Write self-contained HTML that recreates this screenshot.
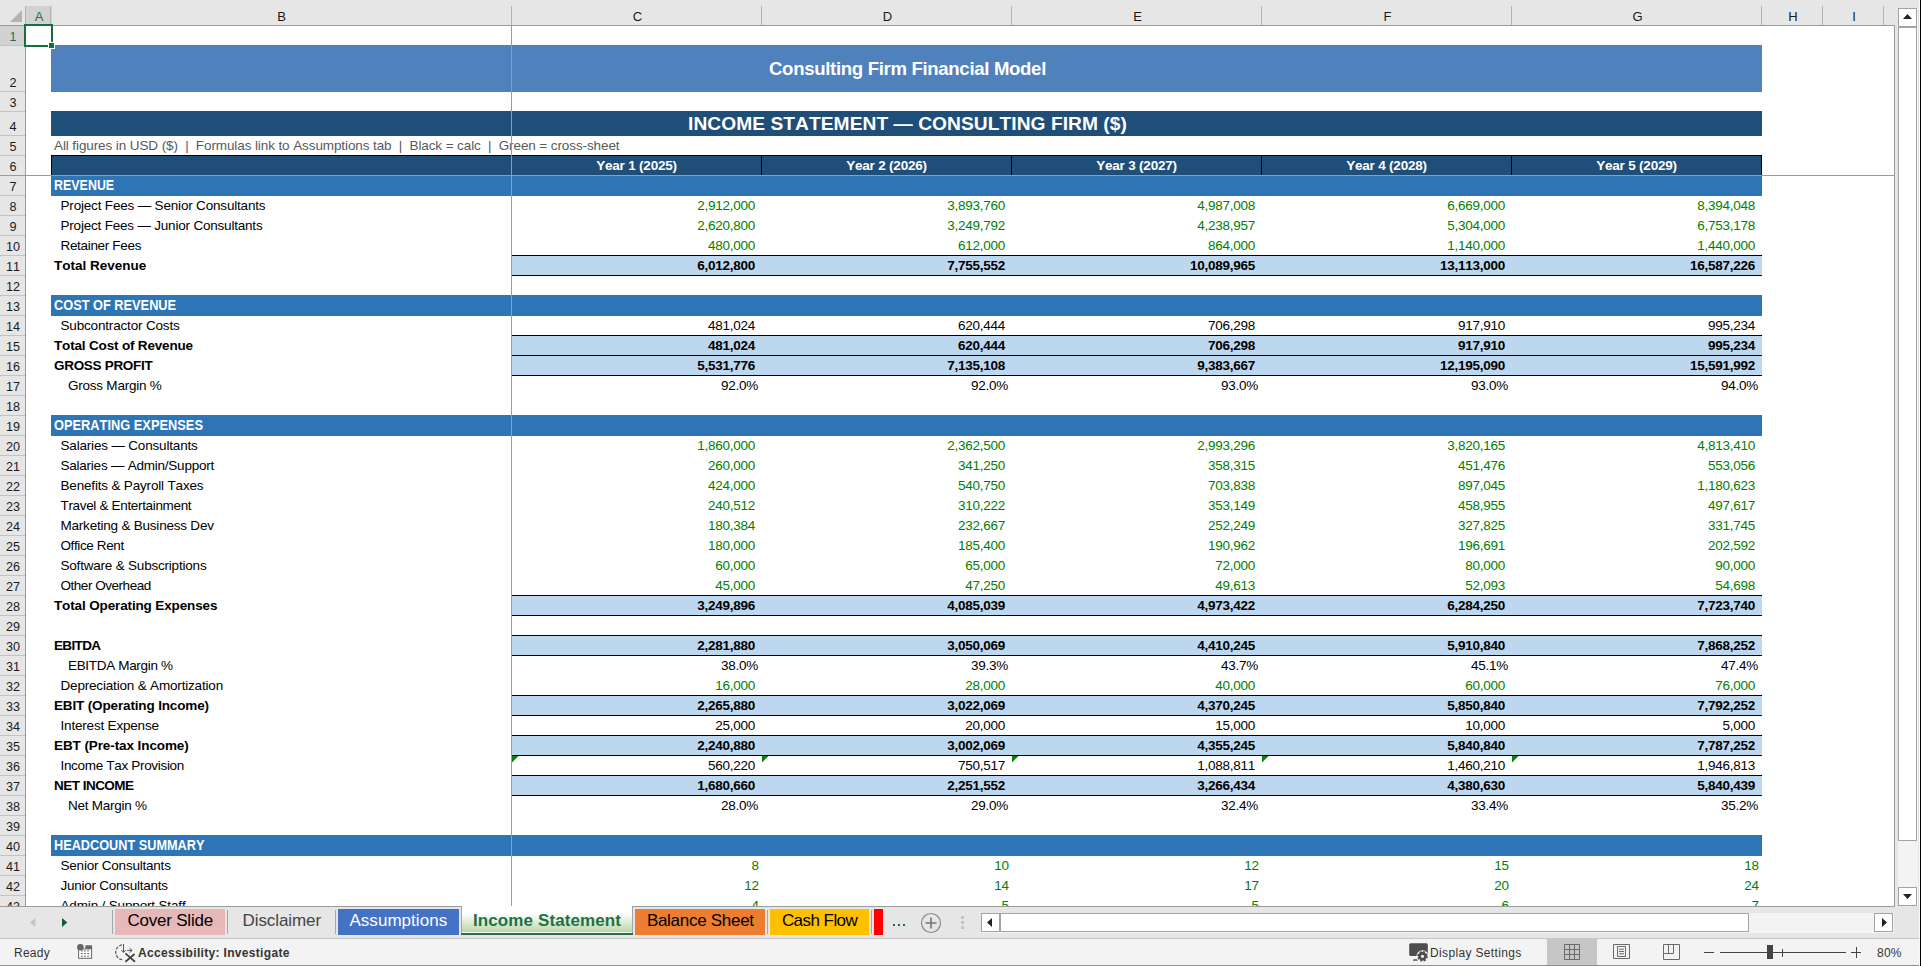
<!DOCTYPE html><html><head><meta charset="utf-8"><title>Income Statement</title><style>
html,body{margin:0;padding:0}body{width:1921px;height:966px;position:relative;overflow:hidden;background:#fff;font-family:"Liberation Sans", sans-serif;font-size:13px;color:#000;font-kerning:none}
div{box-sizing:border-box}svg{position:absolute;overflow:visible}
</style></head><body>
<div style="position:absolute;left:0;top:0;width:1895px;height:906px;overflow:hidden">
<div style="position:absolute;left:51px;top:45px;width:1711px;height:47px;background:#4f81bd;"></div>
<div style="position:absolute;left:51px;top:45px;width:1711px;height:47px;line-height:47px;white-space:pre;text-align:center;padding-left:2px;color:#fff;font-weight:700;font-size:18.6px;letter-spacing:-0.33px">Consulting Firm Financial Model</div>
<div style="position:absolute;left:51px;top:111px;width:1711px;height:25px;background:#1f4e79;"></div>
<div style="position:absolute;left:51px;top:111px;width:1711px;height:25px;line-height:25px;white-space:pre;text-align:center;padding-left:2px;color:#fff;font-weight:700;font-size:19.2px;letter-spacing:0.05px">INCOME STATEMENT — CONSULTING FIRM ($)</div>
<div style="position:absolute;left:51px;top:136px;width:700px;height:20px;line-height:20px;white-space:pre;color:#595959;padding-left:3px;font-size:13.5px;word-spacing:0px;letter-spacing:-0.1px">All figures in USD ($)  |  Formulas link to Assumptions tab  |  Black = calc  |  Green = cross-sheet</div>
<div style="position:absolute;left:51px;top:155px;width:1711px;height:20px;background:#1f4e79;border:1px solid #000;border-bottom:none"></div>
<div style="position:absolute;left:761px;top:155px;width:1px;height:20px;background:#000;"></div>
<div style="position:absolute;left:512px;top:156px;width:249px;height:19px;line-height:19px;white-space:pre;text-align:center;color:#fff;font-weight:700;font-size:13.5px;letter-spacing:-0.2px">Year 1 (2025)</div>
<div style="position:absolute;left:1011px;top:155px;width:1px;height:20px;background:#000;"></div>
<div style="position:absolute;left:762px;top:156px;width:249px;height:19px;line-height:19px;white-space:pre;text-align:center;color:#fff;font-weight:700;font-size:13.5px;letter-spacing:-0.2px">Year 2 (2026)</div>
<div style="position:absolute;left:1261px;top:155px;width:1px;height:20px;background:#000;"></div>
<div style="position:absolute;left:1012px;top:156px;width:249px;height:19px;line-height:19px;white-space:pre;text-align:center;color:#fff;font-weight:700;font-size:13.5px;letter-spacing:-0.2px">Year 3 (2027)</div>
<div style="position:absolute;left:1511px;top:155px;width:1px;height:20px;background:#000;"></div>
<div style="position:absolute;left:1262px;top:156px;width:249px;height:19px;line-height:19px;white-space:pre;text-align:center;color:#fff;font-weight:700;font-size:13.5px;letter-spacing:-0.2px">Year 4 (2028)</div>
<div style="position:absolute;left:1512px;top:156px;width:249px;height:19px;line-height:19px;white-space:pre;text-align:center;color:#fff;font-weight:700;font-size:13.5px;letter-spacing:-0.2px">Year 5 (2029)</div>
<div style="position:absolute;left:51px;top:175px;width:1711px;height:21px;background:#2e75b6;"></div>
<div style="position:absolute;left:51px;top:175px;width:460px;height:20px;line-height:20px;white-space:pre;padding-left:3px;color:#fff;font-weight:700;font-size:14px;"><span style="display:inline-block;transform:scaleX(0.8891);transform-origin:0 50%">REVENUE</span></div>
<div style="position:absolute;left:51px;top:196px;width:460px;height:20px;line-height:20px;white-space:pre;padding-left:9.5px;color:#000;font-size:13.5px;letter-spacing:-0.18px;">Project Fees — Senior Consultants</div>
<div style="position:absolute;left:512px;top:196px;width:250px;height:20px;line-height:20px;white-space:pre;text-align:right;padding-right:7px;color:#008000;font-size:13.5px;letter-spacing:-0.25px;">2,912,000</div>
<div style="position:absolute;left:762px;top:196px;width:250px;height:20px;line-height:20px;white-space:pre;text-align:right;padding-right:7px;color:#008000;font-size:13.5px;letter-spacing:-0.25px;">3,893,760</div>
<div style="position:absolute;left:1012px;top:196px;width:250px;height:20px;line-height:20px;white-space:pre;text-align:right;padding-right:7px;color:#008000;font-size:13.5px;letter-spacing:-0.25px;">4,987,008</div>
<div style="position:absolute;left:1262px;top:196px;width:250px;height:20px;line-height:20px;white-space:pre;text-align:right;padding-right:7px;color:#008000;font-size:13.5px;letter-spacing:-0.25px;">6,669,000</div>
<div style="position:absolute;left:1512px;top:196px;width:250px;height:20px;line-height:20px;white-space:pre;text-align:right;padding-right:7px;color:#008000;font-size:13.5px;letter-spacing:-0.25px;">8,394,048</div>
<div style="position:absolute;left:51px;top:216px;width:460px;height:20px;line-height:20px;white-space:pre;padding-left:9.5px;color:#000;font-size:13.5px;letter-spacing:-0.201px;">Project Fees — Junior Consultants</div>
<div style="position:absolute;left:512px;top:216px;width:250px;height:20px;line-height:20px;white-space:pre;text-align:right;padding-right:7px;color:#008000;font-size:13.5px;letter-spacing:-0.25px;">2,620,800</div>
<div style="position:absolute;left:762px;top:216px;width:250px;height:20px;line-height:20px;white-space:pre;text-align:right;padding-right:7px;color:#008000;font-size:13.5px;letter-spacing:-0.25px;">3,249,792</div>
<div style="position:absolute;left:1012px;top:216px;width:250px;height:20px;line-height:20px;white-space:pre;text-align:right;padding-right:7px;color:#008000;font-size:13.5px;letter-spacing:-0.25px;">4,238,957</div>
<div style="position:absolute;left:1262px;top:216px;width:250px;height:20px;line-height:20px;white-space:pre;text-align:right;padding-right:7px;color:#008000;font-size:13.5px;letter-spacing:-0.25px;">5,304,000</div>
<div style="position:absolute;left:1512px;top:216px;width:250px;height:20px;line-height:20px;white-space:pre;text-align:right;padding-right:7px;color:#008000;font-size:13.5px;letter-spacing:-0.25px;">6,753,178</div>
<div style="position:absolute;left:51px;top:236px;width:460px;height:20px;line-height:20px;white-space:pre;padding-left:9.5px;color:#000;font-size:13.5px;letter-spacing:-0.324px;">Retainer Fees</div>
<div style="position:absolute;left:512px;top:236px;width:250px;height:20px;line-height:20px;white-space:pre;text-align:right;padding-right:7px;color:#008000;font-size:13.5px;letter-spacing:-0.25px;">480,000</div>
<div style="position:absolute;left:762px;top:236px;width:250px;height:20px;line-height:20px;white-space:pre;text-align:right;padding-right:7px;color:#008000;font-size:13.5px;letter-spacing:-0.25px;">612,000</div>
<div style="position:absolute;left:1012px;top:236px;width:250px;height:20px;line-height:20px;white-space:pre;text-align:right;padding-right:7px;color:#008000;font-size:13.5px;letter-spacing:-0.25px;">864,000</div>
<div style="position:absolute;left:1262px;top:236px;width:250px;height:20px;line-height:20px;white-space:pre;text-align:right;padding-right:7px;color:#008000;font-size:13.5px;letter-spacing:-0.25px;">1,140,000</div>
<div style="position:absolute;left:1512px;top:236px;width:250px;height:20px;line-height:20px;white-space:pre;text-align:right;padding-right:7px;color:#008000;font-size:13.5px;letter-spacing:-0.25px;">1,440,000</div>
<div style="position:absolute;left:51px;top:256px;width:460px;height:20px;line-height:20px;white-space:pre;padding-left:3px;color:#000;font-size:13.5px;letter-spacing:-0.004px;font-weight:700;letter-spacing:-0.004px;">Total Revenue</div>
<div style="position:absolute;left:512px;top:255px;width:1250px;height:21px;background:#bdd7ee;border-top:1px solid #000;border-bottom:1px solid #000"></div>
<div style="position:absolute;left:512px;top:256px;width:250px;height:20px;line-height:20px;white-space:pre;text-align:right;padding-right:7px;color:#000;font-size:13.5px;letter-spacing:-0.25px;font-weight:700;letter-spacing:-0.25px;">6,012,800</div>
<div style="position:absolute;left:762px;top:256px;width:250px;height:20px;line-height:20px;white-space:pre;text-align:right;padding-right:7px;color:#000;font-size:13.5px;letter-spacing:-0.25px;font-weight:700;letter-spacing:-0.25px;">7,755,552</div>
<div style="position:absolute;left:1012px;top:256px;width:250px;height:20px;line-height:20px;white-space:pre;text-align:right;padding-right:7px;color:#000;font-size:13.5px;letter-spacing:-0.25px;font-weight:700;letter-spacing:-0.25px;">10,089,965</div>
<div style="position:absolute;left:1262px;top:256px;width:250px;height:20px;line-height:20px;white-space:pre;text-align:right;padding-right:7px;color:#000;font-size:13.5px;letter-spacing:-0.25px;font-weight:700;letter-spacing:-0.25px;">13,113,000</div>
<div style="position:absolute;left:1512px;top:256px;width:250px;height:20px;line-height:20px;white-space:pre;text-align:right;padding-right:7px;color:#000;font-size:13.5px;letter-spacing:-0.25px;font-weight:700;letter-spacing:-0.25px;">16,587,226</div>
<div style="position:absolute;left:51px;top:295px;width:1711px;height:21px;background:#2e75b6;"></div>
<div style="position:absolute;left:51px;top:295px;width:460px;height:20px;line-height:20px;white-space:pre;padding-left:3px;color:#fff;font-weight:700;font-size:14px;"><span style="display:inline-block;transform:scaleX(0.9128);transform-origin:0 50%">COST OF REVENUE</span></div>
<div style="position:absolute;left:51px;top:316px;width:460px;height:20px;line-height:20px;white-space:pre;padding-left:9.5px;color:#000;font-size:13.5px;letter-spacing:-0.168px;">Subcontractor Costs</div>
<div style="position:absolute;left:512px;top:316px;width:250px;height:20px;line-height:20px;white-space:pre;text-align:right;padding-right:7px;color:#000;font-size:13.5px;letter-spacing:-0.25px;">481,024</div>
<div style="position:absolute;left:762px;top:316px;width:250px;height:20px;line-height:20px;white-space:pre;text-align:right;padding-right:7px;color:#000;font-size:13.5px;letter-spacing:-0.25px;">620,444</div>
<div style="position:absolute;left:1012px;top:316px;width:250px;height:20px;line-height:20px;white-space:pre;text-align:right;padding-right:7px;color:#000;font-size:13.5px;letter-spacing:-0.25px;">706,298</div>
<div style="position:absolute;left:1262px;top:316px;width:250px;height:20px;line-height:20px;white-space:pre;text-align:right;padding-right:7px;color:#000;font-size:13.5px;letter-spacing:-0.25px;">917,910</div>
<div style="position:absolute;left:1512px;top:316px;width:250px;height:20px;line-height:20px;white-space:pre;text-align:right;padding-right:7px;color:#000;font-size:13.5px;letter-spacing:-0.25px;">995,234</div>
<div style="position:absolute;left:51px;top:336px;width:460px;height:20px;line-height:20px;white-space:pre;padding-left:3px;color:#000;font-size:13.5px;letter-spacing:-0.17px;font-weight:700;letter-spacing:-0.17px;">Total Cost of Revenue</div>
<div style="position:absolute;left:512px;top:335px;width:1250px;height:21px;background:#bdd7ee;border-top:1px solid #000;border-bottom:1px solid #000"></div>
<div style="position:absolute;left:512px;top:336px;width:250px;height:20px;line-height:20px;white-space:pre;text-align:right;padding-right:7px;color:#000;font-size:13.5px;letter-spacing:-0.25px;font-weight:700;letter-spacing:-0.25px;">481,024</div>
<div style="position:absolute;left:762px;top:336px;width:250px;height:20px;line-height:20px;white-space:pre;text-align:right;padding-right:7px;color:#000;font-size:13.5px;letter-spacing:-0.25px;font-weight:700;letter-spacing:-0.25px;">620,444</div>
<div style="position:absolute;left:1012px;top:336px;width:250px;height:20px;line-height:20px;white-space:pre;text-align:right;padding-right:7px;color:#000;font-size:13.5px;letter-spacing:-0.25px;font-weight:700;letter-spacing:-0.25px;">706,298</div>
<div style="position:absolute;left:1262px;top:336px;width:250px;height:20px;line-height:20px;white-space:pre;text-align:right;padding-right:7px;color:#000;font-size:13.5px;letter-spacing:-0.25px;font-weight:700;letter-spacing:-0.25px;">917,910</div>
<div style="position:absolute;left:1512px;top:336px;width:250px;height:20px;line-height:20px;white-space:pre;text-align:right;padding-right:7px;color:#000;font-size:13.5px;letter-spacing:-0.25px;font-weight:700;letter-spacing:-0.25px;">995,234</div>
<div style="position:absolute;left:51px;top:356px;width:460px;height:20px;line-height:20px;white-space:pre;padding-left:3px;color:#000;font-size:13.5px;letter-spacing:-0.299px;font-weight:700;letter-spacing:-0.299px;">GROSS PROFIT</div>
<div style="position:absolute;left:512px;top:355px;width:1250px;height:21px;background:#bdd7ee;border-top:1px solid #000;border-bottom:1px solid #000"></div>
<div style="position:absolute;left:512px;top:356px;width:250px;height:20px;line-height:20px;white-space:pre;text-align:right;padding-right:7px;color:#000;font-size:13.5px;letter-spacing:-0.25px;font-weight:700;letter-spacing:-0.25px;">5,531,776</div>
<div style="position:absolute;left:762px;top:356px;width:250px;height:20px;line-height:20px;white-space:pre;text-align:right;padding-right:7px;color:#000;font-size:13.5px;letter-spacing:-0.25px;font-weight:700;letter-spacing:-0.25px;">7,135,108</div>
<div style="position:absolute;left:1012px;top:356px;width:250px;height:20px;line-height:20px;white-space:pre;text-align:right;padding-right:7px;color:#000;font-size:13.5px;letter-spacing:-0.25px;font-weight:700;letter-spacing:-0.25px;">9,383,667</div>
<div style="position:absolute;left:1262px;top:356px;width:250px;height:20px;line-height:20px;white-space:pre;text-align:right;padding-right:7px;color:#000;font-size:13.5px;letter-spacing:-0.25px;font-weight:700;letter-spacing:-0.25px;">12,195,090</div>
<div style="position:absolute;left:1512px;top:356px;width:250px;height:20px;line-height:20px;white-space:pre;text-align:right;padding-right:7px;color:#000;font-size:13.5px;letter-spacing:-0.25px;font-weight:700;letter-spacing:-0.25px;">15,591,992</div>
<div style="position:absolute;left:51px;top:376px;width:460px;height:20px;line-height:20px;white-space:pre;padding-left:17px;color:#000;font-size:13.5px;letter-spacing:-0.231px;">Gross Margin %</div>
<div style="position:absolute;left:512px;top:376px;width:250px;height:20px;line-height:20px;white-space:pre;text-align:right;padding-right:4px;color:#000;font-size:13.5px;letter-spacing:-0.25px;">92.0%</div>
<div style="position:absolute;left:762px;top:376px;width:250px;height:20px;line-height:20px;white-space:pre;text-align:right;padding-right:4px;color:#000;font-size:13.5px;letter-spacing:-0.25px;">92.0%</div>
<div style="position:absolute;left:1012px;top:376px;width:250px;height:20px;line-height:20px;white-space:pre;text-align:right;padding-right:4px;color:#000;font-size:13.5px;letter-spacing:-0.25px;">93.0%</div>
<div style="position:absolute;left:1262px;top:376px;width:250px;height:20px;line-height:20px;white-space:pre;text-align:right;padding-right:4px;color:#000;font-size:13.5px;letter-spacing:-0.25px;">93.0%</div>
<div style="position:absolute;left:1512px;top:376px;width:250px;height:20px;line-height:20px;white-space:pre;text-align:right;padding-right:4px;color:#000;font-size:13.5px;letter-spacing:-0.25px;">94.0%</div>
<div style="position:absolute;left:51px;top:415px;width:1711px;height:21px;background:#2e75b6;"></div>
<div style="position:absolute;left:51px;top:415px;width:460px;height:20px;line-height:20px;white-space:pre;padding-left:3px;color:#fff;font-weight:700;font-size:14px;"><span style="display:inline-block;transform:scaleX(0.9161);transform-origin:0 50%">OPERATING EXPENSES</span></div>
<div style="position:absolute;left:51px;top:436px;width:460px;height:20px;line-height:20px;white-space:pre;padding-left:9.5px;color:#000;font-size:13.5px;letter-spacing:-0.18px;">Salaries — Consultants</div>
<div style="position:absolute;left:512px;top:436px;width:250px;height:20px;line-height:20px;white-space:pre;text-align:right;padding-right:7px;color:#008000;font-size:13.5px;letter-spacing:-0.25px;">1,860,000</div>
<div style="position:absolute;left:762px;top:436px;width:250px;height:20px;line-height:20px;white-space:pre;text-align:right;padding-right:7px;color:#008000;font-size:13.5px;letter-spacing:-0.25px;">2,362,500</div>
<div style="position:absolute;left:1012px;top:436px;width:250px;height:20px;line-height:20px;white-space:pre;text-align:right;padding-right:7px;color:#008000;font-size:13.5px;letter-spacing:-0.25px;">2,993,296</div>
<div style="position:absolute;left:1262px;top:436px;width:250px;height:20px;line-height:20px;white-space:pre;text-align:right;padding-right:7px;color:#008000;font-size:13.5px;letter-spacing:-0.25px;">3,820,165</div>
<div style="position:absolute;left:1512px;top:436px;width:250px;height:20px;line-height:20px;white-space:pre;text-align:right;padding-right:7px;color:#008000;font-size:13.5px;letter-spacing:-0.25px;">4,813,410</div>
<div style="position:absolute;left:51px;top:456px;width:460px;height:20px;line-height:20px;white-space:pre;padding-left:9.5px;color:#000;font-size:13.5px;letter-spacing:-0.232px;">Salaries — Admin/Support</div>
<div style="position:absolute;left:512px;top:456px;width:250px;height:20px;line-height:20px;white-space:pre;text-align:right;padding-right:7px;color:#008000;font-size:13.5px;letter-spacing:-0.25px;">260,000</div>
<div style="position:absolute;left:762px;top:456px;width:250px;height:20px;line-height:20px;white-space:pre;text-align:right;padding-right:7px;color:#008000;font-size:13.5px;letter-spacing:-0.25px;">341,250</div>
<div style="position:absolute;left:1012px;top:456px;width:250px;height:20px;line-height:20px;white-space:pre;text-align:right;padding-right:7px;color:#008000;font-size:13.5px;letter-spacing:-0.25px;">358,315</div>
<div style="position:absolute;left:1262px;top:456px;width:250px;height:20px;line-height:20px;white-space:pre;text-align:right;padding-right:7px;color:#008000;font-size:13.5px;letter-spacing:-0.25px;">451,476</div>
<div style="position:absolute;left:1512px;top:456px;width:250px;height:20px;line-height:20px;white-space:pre;text-align:right;padding-right:7px;color:#008000;font-size:13.5px;letter-spacing:-0.25px;">553,056</div>
<div style="position:absolute;left:51px;top:476px;width:460px;height:20px;line-height:20px;white-space:pre;padding-left:9.5px;color:#000;font-size:13.5px;letter-spacing:-0.174px;">Benefits &amp; Payroll Taxes</div>
<div style="position:absolute;left:512px;top:476px;width:250px;height:20px;line-height:20px;white-space:pre;text-align:right;padding-right:7px;color:#008000;font-size:13.5px;letter-spacing:-0.25px;">424,000</div>
<div style="position:absolute;left:762px;top:476px;width:250px;height:20px;line-height:20px;white-space:pre;text-align:right;padding-right:7px;color:#008000;font-size:13.5px;letter-spacing:-0.25px;">540,750</div>
<div style="position:absolute;left:1012px;top:476px;width:250px;height:20px;line-height:20px;white-space:pre;text-align:right;padding-right:7px;color:#008000;font-size:13.5px;letter-spacing:-0.25px;">703,838</div>
<div style="position:absolute;left:1262px;top:476px;width:250px;height:20px;line-height:20px;white-space:pre;text-align:right;padding-right:7px;color:#008000;font-size:13.5px;letter-spacing:-0.25px;">897,045</div>
<div style="position:absolute;left:1512px;top:476px;width:250px;height:20px;line-height:20px;white-space:pre;text-align:right;padding-right:7px;color:#008000;font-size:13.5px;letter-spacing:-0.25px;">1,180,623</div>
<div style="position:absolute;left:51px;top:496px;width:460px;height:20px;line-height:20px;white-space:pre;padding-left:9.5px;color:#000;font-size:13.5px;letter-spacing:-0.331px;">Travel &amp; Entertainment</div>
<div style="position:absolute;left:512px;top:496px;width:250px;height:20px;line-height:20px;white-space:pre;text-align:right;padding-right:7px;color:#008000;font-size:13.5px;letter-spacing:-0.25px;">240,512</div>
<div style="position:absolute;left:762px;top:496px;width:250px;height:20px;line-height:20px;white-space:pre;text-align:right;padding-right:7px;color:#008000;font-size:13.5px;letter-spacing:-0.25px;">310,222</div>
<div style="position:absolute;left:1012px;top:496px;width:250px;height:20px;line-height:20px;white-space:pre;text-align:right;padding-right:7px;color:#008000;font-size:13.5px;letter-spacing:-0.25px;">353,149</div>
<div style="position:absolute;left:1262px;top:496px;width:250px;height:20px;line-height:20px;white-space:pre;text-align:right;padding-right:7px;color:#008000;font-size:13.5px;letter-spacing:-0.25px;">458,955</div>
<div style="position:absolute;left:1512px;top:496px;width:250px;height:20px;line-height:20px;white-space:pre;text-align:right;padding-right:7px;color:#008000;font-size:13.5px;letter-spacing:-0.25px;">497,617</div>
<div style="position:absolute;left:51px;top:516px;width:460px;height:20px;line-height:20px;white-space:pre;padding-left:9.5px;color:#000;font-size:13.5px;letter-spacing:-0.212px;">Marketing &amp; Business Dev</div>
<div style="position:absolute;left:512px;top:516px;width:250px;height:20px;line-height:20px;white-space:pre;text-align:right;padding-right:7px;color:#008000;font-size:13.5px;letter-spacing:-0.25px;">180,384</div>
<div style="position:absolute;left:762px;top:516px;width:250px;height:20px;line-height:20px;white-space:pre;text-align:right;padding-right:7px;color:#008000;font-size:13.5px;letter-spacing:-0.25px;">232,667</div>
<div style="position:absolute;left:1012px;top:516px;width:250px;height:20px;line-height:20px;white-space:pre;text-align:right;padding-right:7px;color:#008000;font-size:13.5px;letter-spacing:-0.25px;">252,249</div>
<div style="position:absolute;left:1262px;top:516px;width:250px;height:20px;line-height:20px;white-space:pre;text-align:right;padding-right:7px;color:#008000;font-size:13.5px;letter-spacing:-0.25px;">327,825</div>
<div style="position:absolute;left:1512px;top:516px;width:250px;height:20px;line-height:20px;white-space:pre;text-align:right;padding-right:7px;color:#008000;font-size:13.5px;letter-spacing:-0.25px;">331,745</div>
<div style="position:absolute;left:51px;top:536px;width:460px;height:20px;line-height:20px;white-space:pre;padding-left:9.5px;color:#000;font-size:13.5px;letter-spacing:-0.377px;">Office Rent</div>
<div style="position:absolute;left:512px;top:536px;width:250px;height:20px;line-height:20px;white-space:pre;text-align:right;padding-right:7px;color:#008000;font-size:13.5px;letter-spacing:-0.25px;">180,000</div>
<div style="position:absolute;left:762px;top:536px;width:250px;height:20px;line-height:20px;white-space:pre;text-align:right;padding-right:7px;color:#008000;font-size:13.5px;letter-spacing:-0.25px;">185,400</div>
<div style="position:absolute;left:1012px;top:536px;width:250px;height:20px;line-height:20px;white-space:pre;text-align:right;padding-right:7px;color:#008000;font-size:13.5px;letter-spacing:-0.25px;">190,962</div>
<div style="position:absolute;left:1262px;top:536px;width:250px;height:20px;line-height:20px;white-space:pre;text-align:right;padding-right:7px;color:#008000;font-size:13.5px;letter-spacing:-0.25px;">196,691</div>
<div style="position:absolute;left:1512px;top:536px;width:250px;height:20px;line-height:20px;white-space:pre;text-align:right;padding-right:7px;color:#008000;font-size:13.5px;letter-spacing:-0.25px;">202,592</div>
<div style="position:absolute;left:51px;top:556px;width:460px;height:20px;line-height:20px;white-space:pre;padding-left:9.5px;color:#000;font-size:13.5px;letter-spacing:-0.204px;">Software &amp; Subscriptions</div>
<div style="position:absolute;left:512px;top:556px;width:250px;height:20px;line-height:20px;white-space:pre;text-align:right;padding-right:7px;color:#008000;font-size:13.5px;letter-spacing:-0.25px;">60,000</div>
<div style="position:absolute;left:762px;top:556px;width:250px;height:20px;line-height:20px;white-space:pre;text-align:right;padding-right:7px;color:#008000;font-size:13.5px;letter-spacing:-0.25px;">65,000</div>
<div style="position:absolute;left:1012px;top:556px;width:250px;height:20px;line-height:20px;white-space:pre;text-align:right;padding-right:7px;color:#008000;font-size:13.5px;letter-spacing:-0.25px;">72,000</div>
<div style="position:absolute;left:1262px;top:556px;width:250px;height:20px;line-height:20px;white-space:pre;text-align:right;padding-right:7px;color:#008000;font-size:13.5px;letter-spacing:-0.25px;">80,000</div>
<div style="position:absolute;left:1512px;top:556px;width:250px;height:20px;line-height:20px;white-space:pre;text-align:right;padding-right:7px;color:#008000;font-size:13.5px;letter-spacing:-0.25px;">90,000</div>
<div style="position:absolute;left:51px;top:576px;width:460px;height:20px;line-height:20px;white-space:pre;padding-left:9.5px;color:#000;font-size:13.5px;letter-spacing:-0.467px;">Other Overhead</div>
<div style="position:absolute;left:512px;top:576px;width:250px;height:20px;line-height:20px;white-space:pre;text-align:right;padding-right:7px;color:#008000;font-size:13.5px;letter-spacing:-0.25px;">45,000</div>
<div style="position:absolute;left:762px;top:576px;width:250px;height:20px;line-height:20px;white-space:pre;text-align:right;padding-right:7px;color:#008000;font-size:13.5px;letter-spacing:-0.25px;">47,250</div>
<div style="position:absolute;left:1012px;top:576px;width:250px;height:20px;line-height:20px;white-space:pre;text-align:right;padding-right:7px;color:#008000;font-size:13.5px;letter-spacing:-0.25px;">49,613</div>
<div style="position:absolute;left:1262px;top:576px;width:250px;height:20px;line-height:20px;white-space:pre;text-align:right;padding-right:7px;color:#008000;font-size:13.5px;letter-spacing:-0.25px;">52,093</div>
<div style="position:absolute;left:1512px;top:576px;width:250px;height:20px;line-height:20px;white-space:pre;text-align:right;padding-right:7px;color:#008000;font-size:13.5px;letter-spacing:-0.25px;">54,698</div>
<div style="position:absolute;left:51px;top:596px;width:460px;height:20px;line-height:20px;white-space:pre;padding-left:3px;color:#000;font-size:13.5px;letter-spacing:-0.136px;font-weight:700;letter-spacing:-0.136px;">Total Operating Expenses</div>
<div style="position:absolute;left:512px;top:595px;width:1250px;height:21px;background:#bdd7ee;border-top:1px solid #000;border-bottom:1px solid #000"></div>
<div style="position:absolute;left:512px;top:596px;width:250px;height:20px;line-height:20px;white-space:pre;text-align:right;padding-right:7px;color:#000;font-size:13.5px;letter-spacing:-0.25px;font-weight:700;letter-spacing:-0.25px;">3,249,896</div>
<div style="position:absolute;left:762px;top:596px;width:250px;height:20px;line-height:20px;white-space:pre;text-align:right;padding-right:7px;color:#000;font-size:13.5px;letter-spacing:-0.25px;font-weight:700;letter-spacing:-0.25px;">4,085,039</div>
<div style="position:absolute;left:1012px;top:596px;width:250px;height:20px;line-height:20px;white-space:pre;text-align:right;padding-right:7px;color:#000;font-size:13.5px;letter-spacing:-0.25px;font-weight:700;letter-spacing:-0.25px;">4,973,422</div>
<div style="position:absolute;left:1262px;top:596px;width:250px;height:20px;line-height:20px;white-space:pre;text-align:right;padding-right:7px;color:#000;font-size:13.5px;letter-spacing:-0.25px;font-weight:700;letter-spacing:-0.25px;">6,284,250</div>
<div style="position:absolute;left:1512px;top:596px;width:250px;height:20px;line-height:20px;white-space:pre;text-align:right;padding-right:7px;color:#000;font-size:13.5px;letter-spacing:-0.25px;font-weight:700;letter-spacing:-0.25px;">7,723,740</div>
<div style="position:absolute;left:51px;top:636px;width:460px;height:20px;line-height:20px;white-space:pre;padding-left:3px;color:#000;font-size:13.5px;letter-spacing:-0.64px;font-weight:700;letter-spacing:-0.64px;">EBITDA</div>
<div style="position:absolute;left:512px;top:635px;width:1250px;height:21px;background:#bdd7ee;border-top:1px solid #000;border-bottom:1px solid #000"></div>
<div style="position:absolute;left:512px;top:636px;width:250px;height:20px;line-height:20px;white-space:pre;text-align:right;padding-right:7px;color:#000;font-size:13.5px;letter-spacing:-0.25px;font-weight:700;letter-spacing:-0.25px;">2,281,880</div>
<div style="position:absolute;left:762px;top:636px;width:250px;height:20px;line-height:20px;white-space:pre;text-align:right;padding-right:7px;color:#000;font-size:13.5px;letter-spacing:-0.25px;font-weight:700;letter-spacing:-0.25px;">3,050,069</div>
<div style="position:absolute;left:1012px;top:636px;width:250px;height:20px;line-height:20px;white-space:pre;text-align:right;padding-right:7px;color:#000;font-size:13.5px;letter-spacing:-0.25px;font-weight:700;letter-spacing:-0.25px;">4,410,245</div>
<div style="position:absolute;left:1262px;top:636px;width:250px;height:20px;line-height:20px;white-space:pre;text-align:right;padding-right:7px;color:#000;font-size:13.5px;letter-spacing:-0.25px;font-weight:700;letter-spacing:-0.25px;">5,910,840</div>
<div style="position:absolute;left:1512px;top:636px;width:250px;height:20px;line-height:20px;white-space:pre;text-align:right;padding-right:7px;color:#000;font-size:13.5px;letter-spacing:-0.25px;font-weight:700;letter-spacing:-0.25px;">7,868,252</div>
<div style="position:absolute;left:51px;top:656px;width:460px;height:20px;line-height:20px;white-space:pre;padding-left:17px;color:#000;font-size:13.5px;letter-spacing:-0.321px;">EBITDA Margin %</div>
<div style="position:absolute;left:512px;top:656px;width:250px;height:20px;line-height:20px;white-space:pre;text-align:right;padding-right:4px;color:#000;font-size:13.5px;letter-spacing:-0.25px;">38.0%</div>
<div style="position:absolute;left:762px;top:656px;width:250px;height:20px;line-height:20px;white-space:pre;text-align:right;padding-right:4px;color:#000;font-size:13.5px;letter-spacing:-0.25px;">39.3%</div>
<div style="position:absolute;left:1012px;top:656px;width:250px;height:20px;line-height:20px;white-space:pre;text-align:right;padding-right:4px;color:#000;font-size:13.5px;letter-spacing:-0.25px;">43.7%</div>
<div style="position:absolute;left:1262px;top:656px;width:250px;height:20px;line-height:20px;white-space:pre;text-align:right;padding-right:4px;color:#000;font-size:13.5px;letter-spacing:-0.25px;">45.1%</div>
<div style="position:absolute;left:1512px;top:656px;width:250px;height:20px;line-height:20px;white-space:pre;text-align:right;padding-right:4px;color:#000;font-size:13.5px;letter-spacing:-0.25px;">47.4%</div>
<div style="position:absolute;left:51px;top:676px;width:460px;height:20px;line-height:20px;white-space:pre;padding-left:9.5px;color:#000;font-size:13.5px;letter-spacing:-0.18px;">Depreciation &amp; Amortization</div>
<div style="position:absolute;left:512px;top:676px;width:250px;height:20px;line-height:20px;white-space:pre;text-align:right;padding-right:7px;color:#008000;font-size:13.5px;letter-spacing:-0.25px;">16,000</div>
<div style="position:absolute;left:762px;top:676px;width:250px;height:20px;line-height:20px;white-space:pre;text-align:right;padding-right:7px;color:#008000;font-size:13.5px;letter-spacing:-0.25px;">28,000</div>
<div style="position:absolute;left:1012px;top:676px;width:250px;height:20px;line-height:20px;white-space:pre;text-align:right;padding-right:7px;color:#008000;font-size:13.5px;letter-spacing:-0.25px;">40,000</div>
<div style="position:absolute;left:1262px;top:676px;width:250px;height:20px;line-height:20px;white-space:pre;text-align:right;padding-right:7px;color:#008000;font-size:13.5px;letter-spacing:-0.25px;">60,000</div>
<div style="position:absolute;left:1512px;top:676px;width:250px;height:20px;line-height:20px;white-space:pre;text-align:right;padding-right:7px;color:#008000;font-size:13.5px;letter-spacing:-0.25px;">76,000</div>
<div style="position:absolute;left:51px;top:696px;width:460px;height:20px;line-height:20px;white-space:pre;padding-left:3px;color:#000;font-size:13.5px;letter-spacing:-0.146px;font-weight:700;letter-spacing:-0.146px;">EBIT (Operating Income)</div>
<div style="position:absolute;left:512px;top:695px;width:1250px;height:21px;background:#bdd7ee;border-top:1px solid #000;border-bottom:1px solid #000"></div>
<div style="position:absolute;left:512px;top:696px;width:250px;height:20px;line-height:20px;white-space:pre;text-align:right;padding-right:7px;color:#000;font-size:13.5px;letter-spacing:-0.25px;font-weight:700;letter-spacing:-0.25px;">2,265,880</div>
<div style="position:absolute;left:762px;top:696px;width:250px;height:20px;line-height:20px;white-space:pre;text-align:right;padding-right:7px;color:#000;font-size:13.5px;letter-spacing:-0.25px;font-weight:700;letter-spacing:-0.25px;">3,022,069</div>
<div style="position:absolute;left:1012px;top:696px;width:250px;height:20px;line-height:20px;white-space:pre;text-align:right;padding-right:7px;color:#000;font-size:13.5px;letter-spacing:-0.25px;font-weight:700;letter-spacing:-0.25px;">4,370,245</div>
<div style="position:absolute;left:1262px;top:696px;width:250px;height:20px;line-height:20px;white-space:pre;text-align:right;padding-right:7px;color:#000;font-size:13.5px;letter-spacing:-0.25px;font-weight:700;letter-spacing:-0.25px;">5,850,840</div>
<div style="position:absolute;left:1512px;top:696px;width:250px;height:20px;line-height:20px;white-space:pre;text-align:right;padding-right:7px;color:#000;font-size:13.5px;letter-spacing:-0.25px;font-weight:700;letter-spacing:-0.25px;">7,792,252</div>
<div style="position:absolute;left:51px;top:716px;width:460px;height:20px;line-height:20px;white-space:pre;padding-left:9.5px;color:#000;font-size:13.5px;letter-spacing:-0.188px;">Interest Expense</div>
<div style="position:absolute;left:512px;top:716px;width:250px;height:20px;line-height:20px;white-space:pre;text-align:right;padding-right:7px;color:#000;font-size:13.5px;letter-spacing:-0.25px;">25,000</div>
<div style="position:absolute;left:762px;top:716px;width:250px;height:20px;line-height:20px;white-space:pre;text-align:right;padding-right:7px;color:#000;font-size:13.5px;letter-spacing:-0.25px;">20,000</div>
<div style="position:absolute;left:1012px;top:716px;width:250px;height:20px;line-height:20px;white-space:pre;text-align:right;padding-right:7px;color:#000;font-size:13.5px;letter-spacing:-0.25px;">15,000</div>
<div style="position:absolute;left:1262px;top:716px;width:250px;height:20px;line-height:20px;white-space:pre;text-align:right;padding-right:7px;color:#000;font-size:13.5px;letter-spacing:-0.25px;">10,000</div>
<div style="position:absolute;left:1512px;top:716px;width:250px;height:20px;line-height:20px;white-space:pre;text-align:right;padding-right:7px;color:#000;font-size:13.5px;letter-spacing:-0.25px;">5,000</div>
<div style="position:absolute;left:51px;top:736px;width:460px;height:20px;line-height:20px;white-space:pre;padding-left:3px;color:#000;font-size:13.5px;letter-spacing:-0.092px;font-weight:700;letter-spacing:-0.092px;">EBT (Pre-tax Income)</div>
<div style="position:absolute;left:512px;top:735px;width:1250px;height:21px;background:#bdd7ee;border-top:1px solid #000;border-bottom:1px solid #000"></div>
<div style="position:absolute;left:512px;top:736px;width:250px;height:20px;line-height:20px;white-space:pre;text-align:right;padding-right:7px;color:#000;font-size:13.5px;letter-spacing:-0.25px;font-weight:700;letter-spacing:-0.25px;">2,240,880</div>
<div style="position:absolute;left:762px;top:736px;width:250px;height:20px;line-height:20px;white-space:pre;text-align:right;padding-right:7px;color:#000;font-size:13.5px;letter-spacing:-0.25px;font-weight:700;letter-spacing:-0.25px;">3,002,069</div>
<div style="position:absolute;left:1012px;top:736px;width:250px;height:20px;line-height:20px;white-space:pre;text-align:right;padding-right:7px;color:#000;font-size:13.5px;letter-spacing:-0.25px;font-weight:700;letter-spacing:-0.25px;">4,355,245</div>
<div style="position:absolute;left:1262px;top:736px;width:250px;height:20px;line-height:20px;white-space:pre;text-align:right;padding-right:7px;color:#000;font-size:13.5px;letter-spacing:-0.25px;font-weight:700;letter-spacing:-0.25px;">5,840,840</div>
<div style="position:absolute;left:1512px;top:736px;width:250px;height:20px;line-height:20px;white-space:pre;text-align:right;padding-right:7px;color:#000;font-size:13.5px;letter-spacing:-0.25px;font-weight:700;letter-spacing:-0.25px;">7,787,252</div>
<div style="position:absolute;left:51px;top:756px;width:460px;height:20px;line-height:20px;white-space:pre;padding-left:9.5px;color:#000;font-size:13.5px;letter-spacing:-0.318px;">Income Tax Provision</div>
<div style="position:absolute;left:512px;top:756px;width:250px;height:20px;line-height:20px;white-space:pre;text-align:right;padding-right:7px;color:#000;font-size:13.5px;letter-spacing:-0.25px;">560,220</div>
<div style="position:absolute;left:762px;top:756px;width:250px;height:20px;line-height:20px;white-space:pre;text-align:right;padding-right:7px;color:#000;font-size:13.5px;letter-spacing:-0.25px;">750,517</div>
<div style="position:absolute;left:1012px;top:756px;width:250px;height:20px;line-height:20px;white-space:pre;text-align:right;padding-right:7px;color:#000;font-size:13.5px;letter-spacing:-0.25px;">1,088,811</div>
<div style="position:absolute;left:1262px;top:756px;width:250px;height:20px;line-height:20px;white-space:pre;text-align:right;padding-right:7px;color:#000;font-size:13.5px;letter-spacing:-0.25px;">1,460,210</div>
<div style="position:absolute;left:1512px;top:756px;width:250px;height:20px;line-height:20px;white-space:pre;text-align:right;padding-right:7px;color:#000;font-size:13.5px;letter-spacing:-0.25px;">1,946,813</div>
<svg style="left:512px;top:756px" width="7" height="7"><path d="M0 0H6.5L0 6.5Z" fill="#107c10"/></svg>
<svg style="left:762px;top:756px" width="7" height="7"><path d="M0 0H6.5L0 6.5Z" fill="#107c10"/></svg>
<svg style="left:1012px;top:756px" width="7" height="7"><path d="M0 0H6.5L0 6.5Z" fill="#107c10"/></svg>
<svg style="left:1262px;top:756px" width="7" height="7"><path d="M0 0H6.5L0 6.5Z" fill="#107c10"/></svg>
<svg style="left:1512px;top:756px" width="7" height="7"><path d="M0 0H6.5L0 6.5Z" fill="#107c10"/></svg>
<div style="position:absolute;left:51px;top:776px;width:460px;height:20px;line-height:20px;white-space:pre;padding-left:3px;color:#000;font-size:13.5px;letter-spacing:-0.52px;font-weight:700;letter-spacing:-0.52px;">NET INCOME</div>
<div style="position:absolute;left:512px;top:775px;width:1250px;height:21px;background:#bdd7ee;border-top:1px solid #000;border-bottom:1px solid #000"></div>
<div style="position:absolute;left:512px;top:776px;width:250px;height:20px;line-height:20px;white-space:pre;text-align:right;padding-right:7px;color:#000;font-size:13.5px;letter-spacing:-0.25px;font-weight:700;letter-spacing:-0.25px;">1,680,660</div>
<div style="position:absolute;left:762px;top:776px;width:250px;height:20px;line-height:20px;white-space:pre;text-align:right;padding-right:7px;color:#000;font-size:13.5px;letter-spacing:-0.25px;font-weight:700;letter-spacing:-0.25px;">2,251,552</div>
<div style="position:absolute;left:1012px;top:776px;width:250px;height:20px;line-height:20px;white-space:pre;text-align:right;padding-right:7px;color:#000;font-size:13.5px;letter-spacing:-0.25px;font-weight:700;letter-spacing:-0.25px;">3,266,434</div>
<div style="position:absolute;left:1262px;top:776px;width:250px;height:20px;line-height:20px;white-space:pre;text-align:right;padding-right:7px;color:#000;font-size:13.5px;letter-spacing:-0.25px;font-weight:700;letter-spacing:-0.25px;">4,380,630</div>
<div style="position:absolute;left:1512px;top:776px;width:250px;height:20px;line-height:20px;white-space:pre;text-align:right;padding-right:7px;color:#000;font-size:13.5px;letter-spacing:-0.25px;font-weight:700;letter-spacing:-0.25px;">5,840,439</div>
<div style="position:absolute;left:51px;top:796px;width:460px;height:20px;line-height:20px;white-space:pre;padding-left:17px;color:#000;font-size:13.5px;letter-spacing:-0.247px;">Net Margin %</div>
<div style="position:absolute;left:512px;top:796px;width:250px;height:20px;line-height:20px;white-space:pre;text-align:right;padding-right:4px;color:#000;font-size:13.5px;letter-spacing:-0.25px;">28.0%</div>
<div style="position:absolute;left:762px;top:796px;width:250px;height:20px;line-height:20px;white-space:pre;text-align:right;padding-right:4px;color:#000;font-size:13.5px;letter-spacing:-0.25px;">29.0%</div>
<div style="position:absolute;left:1012px;top:796px;width:250px;height:20px;line-height:20px;white-space:pre;text-align:right;padding-right:4px;color:#000;font-size:13.5px;letter-spacing:-0.25px;">32.4%</div>
<div style="position:absolute;left:1262px;top:796px;width:250px;height:20px;line-height:20px;white-space:pre;text-align:right;padding-right:4px;color:#000;font-size:13.5px;letter-spacing:-0.25px;">33.4%</div>
<div style="position:absolute;left:1512px;top:796px;width:250px;height:20px;line-height:20px;white-space:pre;text-align:right;padding-right:4px;color:#000;font-size:13.5px;letter-spacing:-0.25px;">35.2%</div>
<div style="position:absolute;left:51px;top:835px;width:1711px;height:21px;background:#2e75b6;"></div>
<div style="position:absolute;left:51px;top:835px;width:460px;height:20px;line-height:20px;white-space:pre;padding-left:3px;color:#fff;font-weight:700;font-size:14px;"><span style="display:inline-block;transform:scaleX(0.9079);transform-origin:0 50%">HEADCOUNT SUMMARY</span></div>
<div style="position:absolute;left:51px;top:856px;width:460px;height:20px;line-height:20px;white-space:pre;padding-left:9.5px;color:#000;font-size:13.5px;letter-spacing:-0.215px;">Senior Consultants</div>
<div style="position:absolute;left:512px;top:856px;width:250px;height:20px;line-height:20px;white-space:pre;text-align:right;padding-right:3.3px;color:#008000;font-size:13.5px;letter-spacing:-0.25px;">8</div>
<div style="position:absolute;left:762px;top:856px;width:250px;height:20px;line-height:20px;white-space:pre;text-align:right;padding-right:3.3px;color:#008000;font-size:13.5px;letter-spacing:-0.25px;">10</div>
<div style="position:absolute;left:1012px;top:856px;width:250px;height:20px;line-height:20px;white-space:pre;text-align:right;padding-right:3.3px;color:#008000;font-size:13.5px;letter-spacing:-0.25px;">12</div>
<div style="position:absolute;left:1262px;top:856px;width:250px;height:20px;line-height:20px;white-space:pre;text-align:right;padding-right:3.3px;color:#008000;font-size:13.5px;letter-spacing:-0.25px;">15</div>
<div style="position:absolute;left:1512px;top:856px;width:250px;height:20px;line-height:20px;white-space:pre;text-align:right;padding-right:3.3px;color:#008000;font-size:13.5px;letter-spacing:-0.25px;">18</div>
<div style="position:absolute;left:51px;top:876px;width:460px;height:20px;line-height:20px;white-space:pre;padding-left:9.5px;color:#000;font-size:13.5px;letter-spacing:-0.253px;">Junior Consultants</div>
<div style="position:absolute;left:512px;top:876px;width:250px;height:20px;line-height:20px;white-space:pre;text-align:right;padding-right:3.3px;color:#008000;font-size:13.5px;letter-spacing:-0.25px;">12</div>
<div style="position:absolute;left:762px;top:876px;width:250px;height:20px;line-height:20px;white-space:pre;text-align:right;padding-right:3.3px;color:#008000;font-size:13.5px;letter-spacing:-0.25px;">14</div>
<div style="position:absolute;left:1012px;top:876px;width:250px;height:20px;line-height:20px;white-space:pre;text-align:right;padding-right:3.3px;color:#008000;font-size:13.5px;letter-spacing:-0.25px;">17</div>
<div style="position:absolute;left:1262px;top:876px;width:250px;height:20px;line-height:20px;white-space:pre;text-align:right;padding-right:3.3px;color:#008000;font-size:13.5px;letter-spacing:-0.25px;">20</div>
<div style="position:absolute;left:1512px;top:876px;width:250px;height:20px;line-height:20px;white-space:pre;text-align:right;padding-right:3.3px;color:#008000;font-size:13.5px;letter-spacing:-0.25px;">24</div>
<div style="position:absolute;left:51px;top:896px;width:460px;height:20px;line-height:20px;white-space:pre;padding-left:9.5px;color:#000;font-size:13.5px;letter-spacing:-0.158px;">Admin / Support Staff</div>
<div style="position:absolute;left:512px;top:896px;width:250px;height:20px;line-height:20px;white-space:pre;text-align:right;padding-right:3.3px;color:#008000;font-size:13.5px;letter-spacing:-0.25px;">4</div>
<div style="position:absolute;left:762px;top:896px;width:250px;height:20px;line-height:20px;white-space:pre;text-align:right;padding-right:3.3px;color:#008000;font-size:13.5px;letter-spacing:-0.25px;">5</div>
<div style="position:absolute;left:1012px;top:896px;width:250px;height:20px;line-height:20px;white-space:pre;text-align:right;padding-right:3.3px;color:#008000;font-size:13.5px;letter-spacing:-0.25px;">5</div>
<div style="position:absolute;left:1262px;top:896px;width:250px;height:20px;line-height:20px;white-space:pre;text-align:right;padding-right:3.3px;color:#008000;font-size:13.5px;letter-spacing:-0.25px;">6</div>
<div style="position:absolute;left:1512px;top:896px;width:250px;height:20px;line-height:20px;white-space:pre;text-align:right;padding-right:3.3px;color:#008000;font-size:13.5px;letter-spacing:-0.25px;">7</div>
<div style="position:absolute;left:511px;top:26px;width:1px;height:880px;background:#9b9b9b;"></div>
<div style="position:absolute;left:0px;top:175px;width:1895px;height:1px;background:#9b9b9b;"></div>
</div>
<div style="position:absolute;left:0px;top:0px;width:1921px;height:25px;background:#e6e6e6;"></div>
<div style="position:absolute;left:0px;top:25px;width:1895px;height:1px;background:#9b9b9b;"></div>
<div style="position:absolute;left:0px;top:26px;width:25px;height:880px;background:#e6e6e6;"></div>
<div style="position:absolute;left:1895px;top:25px;width:26px;height:913px;background:#e6e6e6;"></div>
<div style="position:absolute;left:26px;top:6px;width:26px;height:19px;background:#d2d2d2;"></div>
<div style="position:absolute;left:0px;top:26px;width:25px;height:20px;background:#d2d2d2;"></div>
<div style="position:absolute;left:25px;top:6px;width:1px;height:19px;background:#b4b4b4;"></div>
<div style="position:absolute;left:50px;top:6px;width:1px;height:19px;background:#b4b4b4;"></div>
<div style="position:absolute;left:511px;top:6px;width:1px;height:19px;background:#b4b4b4;"></div>
<div style="position:absolute;left:761px;top:6px;width:1px;height:19px;background:#b4b4b4;"></div>
<div style="position:absolute;left:1011px;top:6px;width:1px;height:19px;background:#b4b4b4;"></div>
<div style="position:absolute;left:1261px;top:6px;width:1px;height:19px;background:#b4b4b4;"></div>
<div style="position:absolute;left:1511px;top:6px;width:1px;height:19px;background:#b4b4b4;"></div>
<div style="position:absolute;left:1761px;top:6px;width:1px;height:19px;background:#b4b4b4;"></div>
<div style="position:absolute;left:1822px;top:6px;width:1px;height:19px;background:#b4b4b4;"></div>
<div style="position:absolute;left:1883px;top:6px;width:1px;height:19px;background:#b4b4b4;"></div>
<div style="position:absolute;left:27px;top:6.5px;width:24px;height:19px;line-height:19px;white-space:pre;text-align:center;font-size:13px;color:#217346">A</div>
<div style="position:absolute;left:52px;top:6.5px;width:459px;height:19px;line-height:19px;white-space:pre;text-align:center;font-size:13px;color:#1a1a1a">B</div>
<div style="position:absolute;left:513px;top:6.5px;width:249px;height:19px;line-height:19px;white-space:pre;text-align:center;font-size:13px;color:#1a1a1a">C</div>
<div style="position:absolute;left:763px;top:6.5px;width:249px;height:19px;line-height:19px;white-space:pre;text-align:center;font-size:13px;color:#1a1a1a">D</div>
<div style="position:absolute;left:1013px;top:6.5px;width:249px;height:19px;line-height:19px;white-space:pre;text-align:center;font-size:13px;color:#1a1a1a">E</div>
<div style="position:absolute;left:1263px;top:6.5px;width:249px;height:19px;line-height:19px;white-space:pre;text-align:center;font-size:13px;color:#1a1a1a">F</div>
<div style="position:absolute;left:1513px;top:6.5px;width:249px;height:19px;line-height:19px;white-space:pre;text-align:center;font-size:13px;color:#1a1a1a">G</div>
<div style="position:absolute;left:1763px;top:6.5px;width:60px;height:19px;line-height:19px;white-space:pre;text-align:center;font-size:13px;color:#1a1a1a">H</div>
<div style="position:absolute;left:1824px;top:6.5px;width:60px;height:19px;line-height:19px;white-space:pre;text-align:center;font-size:13px;color:#1a1a1a">I</div>
<div style="position:absolute;left:0px;top:45px;width:25px;height:1px;background:#c3c3c3;"></div>
<div style="position:absolute;left:0.5px;top:30px;width:25px;height:14px;line-height:14px;text-align:center;font-size:12.6px;color:#217346;overflow:hidden;">1</div>
<div style="position:absolute;left:0px;top:91px;width:25px;height:1px;background:#c3c3c3;"></div>
<div style="position:absolute;left:0.5px;top:76px;width:25px;height:14px;line-height:14px;text-align:center;font-size:12.6px;color:#1a1a1a;overflow:hidden;">2</div>
<div style="position:absolute;left:0px;top:111px;width:25px;height:1px;background:#c3c3c3;"></div>
<div style="position:absolute;left:0.5px;top:96px;width:25px;height:14px;line-height:14px;text-align:center;font-size:12.6px;color:#1a1a1a;overflow:hidden;">3</div>
<div style="position:absolute;left:0px;top:135px;width:25px;height:1px;background:#c3c3c3;"></div>
<div style="position:absolute;left:0.5px;top:120px;width:25px;height:14px;line-height:14px;text-align:center;font-size:12.6px;color:#1a1a1a;overflow:hidden;">4</div>
<div style="position:absolute;left:0px;top:155px;width:25px;height:1px;background:#c3c3c3;"></div>
<div style="position:absolute;left:0.5px;top:140px;width:25px;height:14px;line-height:14px;text-align:center;font-size:12.6px;color:#1a1a1a;overflow:hidden;">5</div>
<div style="position:absolute;left:0px;top:175px;width:25px;height:1px;background:#c3c3c3;"></div>
<div style="position:absolute;left:0.5px;top:160px;width:25px;height:14px;line-height:14px;text-align:center;font-size:12.6px;color:#1a1a1a;overflow:hidden;">6</div>
<div style="position:absolute;left:0px;top:195px;width:25px;height:1px;background:#c3c3c3;"></div>
<div style="position:absolute;left:0.5px;top:180px;width:25px;height:14px;line-height:14px;text-align:center;font-size:12.6px;color:#1a1a1a;overflow:hidden;">7</div>
<div style="position:absolute;left:0px;top:215px;width:25px;height:1px;background:#c3c3c3;"></div>
<div style="position:absolute;left:0.5px;top:200px;width:25px;height:14px;line-height:14px;text-align:center;font-size:12.6px;color:#1a1a1a;overflow:hidden;">8</div>
<div style="position:absolute;left:0px;top:235px;width:25px;height:1px;background:#c3c3c3;"></div>
<div style="position:absolute;left:0.5px;top:220px;width:25px;height:14px;line-height:14px;text-align:center;font-size:12.6px;color:#1a1a1a;overflow:hidden;">9</div>
<div style="position:absolute;left:0px;top:255px;width:25px;height:1px;background:#c3c3c3;"></div>
<div style="position:absolute;left:0.5px;top:240px;width:25px;height:14px;line-height:14px;text-align:center;font-size:12.6px;color:#1a1a1a;overflow:hidden;">10</div>
<div style="position:absolute;left:0px;top:275px;width:25px;height:1px;background:#c3c3c3;"></div>
<div style="position:absolute;left:0.5px;top:260px;width:25px;height:14px;line-height:14px;text-align:center;font-size:12.6px;color:#1a1a1a;overflow:hidden;">11</div>
<div style="position:absolute;left:0px;top:295px;width:25px;height:1px;background:#c3c3c3;"></div>
<div style="position:absolute;left:0.5px;top:280px;width:25px;height:14px;line-height:14px;text-align:center;font-size:12.6px;color:#1a1a1a;overflow:hidden;">12</div>
<div style="position:absolute;left:0px;top:315px;width:25px;height:1px;background:#c3c3c3;"></div>
<div style="position:absolute;left:0.5px;top:300px;width:25px;height:14px;line-height:14px;text-align:center;font-size:12.6px;color:#1a1a1a;overflow:hidden;">13</div>
<div style="position:absolute;left:0px;top:335px;width:25px;height:1px;background:#c3c3c3;"></div>
<div style="position:absolute;left:0.5px;top:320px;width:25px;height:14px;line-height:14px;text-align:center;font-size:12.6px;color:#1a1a1a;overflow:hidden;">14</div>
<div style="position:absolute;left:0px;top:355px;width:25px;height:1px;background:#c3c3c3;"></div>
<div style="position:absolute;left:0.5px;top:340px;width:25px;height:14px;line-height:14px;text-align:center;font-size:12.6px;color:#1a1a1a;overflow:hidden;">15</div>
<div style="position:absolute;left:0px;top:375px;width:25px;height:1px;background:#c3c3c3;"></div>
<div style="position:absolute;left:0.5px;top:360px;width:25px;height:14px;line-height:14px;text-align:center;font-size:12.6px;color:#1a1a1a;overflow:hidden;">16</div>
<div style="position:absolute;left:0px;top:395px;width:25px;height:1px;background:#c3c3c3;"></div>
<div style="position:absolute;left:0.5px;top:380px;width:25px;height:14px;line-height:14px;text-align:center;font-size:12.6px;color:#1a1a1a;overflow:hidden;">17</div>
<div style="position:absolute;left:0px;top:415px;width:25px;height:1px;background:#c3c3c3;"></div>
<div style="position:absolute;left:0.5px;top:400px;width:25px;height:14px;line-height:14px;text-align:center;font-size:12.6px;color:#1a1a1a;overflow:hidden;">18</div>
<div style="position:absolute;left:0px;top:435px;width:25px;height:1px;background:#c3c3c3;"></div>
<div style="position:absolute;left:0.5px;top:420px;width:25px;height:14px;line-height:14px;text-align:center;font-size:12.6px;color:#1a1a1a;overflow:hidden;">19</div>
<div style="position:absolute;left:0px;top:455px;width:25px;height:1px;background:#c3c3c3;"></div>
<div style="position:absolute;left:0.5px;top:440px;width:25px;height:14px;line-height:14px;text-align:center;font-size:12.6px;color:#1a1a1a;overflow:hidden;">20</div>
<div style="position:absolute;left:0px;top:475px;width:25px;height:1px;background:#c3c3c3;"></div>
<div style="position:absolute;left:0.5px;top:460px;width:25px;height:14px;line-height:14px;text-align:center;font-size:12.6px;color:#1a1a1a;overflow:hidden;">21</div>
<div style="position:absolute;left:0px;top:495px;width:25px;height:1px;background:#c3c3c3;"></div>
<div style="position:absolute;left:0.5px;top:480px;width:25px;height:14px;line-height:14px;text-align:center;font-size:12.6px;color:#1a1a1a;overflow:hidden;">22</div>
<div style="position:absolute;left:0px;top:515px;width:25px;height:1px;background:#c3c3c3;"></div>
<div style="position:absolute;left:0.5px;top:500px;width:25px;height:14px;line-height:14px;text-align:center;font-size:12.6px;color:#1a1a1a;overflow:hidden;">23</div>
<div style="position:absolute;left:0px;top:535px;width:25px;height:1px;background:#c3c3c3;"></div>
<div style="position:absolute;left:0.5px;top:520px;width:25px;height:14px;line-height:14px;text-align:center;font-size:12.6px;color:#1a1a1a;overflow:hidden;">24</div>
<div style="position:absolute;left:0px;top:555px;width:25px;height:1px;background:#c3c3c3;"></div>
<div style="position:absolute;left:0.5px;top:540px;width:25px;height:14px;line-height:14px;text-align:center;font-size:12.6px;color:#1a1a1a;overflow:hidden;">25</div>
<div style="position:absolute;left:0px;top:575px;width:25px;height:1px;background:#c3c3c3;"></div>
<div style="position:absolute;left:0.5px;top:560px;width:25px;height:14px;line-height:14px;text-align:center;font-size:12.6px;color:#1a1a1a;overflow:hidden;">26</div>
<div style="position:absolute;left:0px;top:595px;width:25px;height:1px;background:#c3c3c3;"></div>
<div style="position:absolute;left:0.5px;top:580px;width:25px;height:14px;line-height:14px;text-align:center;font-size:12.6px;color:#1a1a1a;overflow:hidden;">27</div>
<div style="position:absolute;left:0px;top:615px;width:25px;height:1px;background:#c3c3c3;"></div>
<div style="position:absolute;left:0.5px;top:600px;width:25px;height:14px;line-height:14px;text-align:center;font-size:12.6px;color:#1a1a1a;overflow:hidden;">28</div>
<div style="position:absolute;left:0px;top:635px;width:25px;height:1px;background:#c3c3c3;"></div>
<div style="position:absolute;left:0.5px;top:620px;width:25px;height:14px;line-height:14px;text-align:center;font-size:12.6px;color:#1a1a1a;overflow:hidden;">29</div>
<div style="position:absolute;left:0px;top:655px;width:25px;height:1px;background:#c3c3c3;"></div>
<div style="position:absolute;left:0.5px;top:640px;width:25px;height:14px;line-height:14px;text-align:center;font-size:12.6px;color:#1a1a1a;overflow:hidden;">30</div>
<div style="position:absolute;left:0px;top:675px;width:25px;height:1px;background:#c3c3c3;"></div>
<div style="position:absolute;left:0.5px;top:660px;width:25px;height:14px;line-height:14px;text-align:center;font-size:12.6px;color:#1a1a1a;overflow:hidden;">31</div>
<div style="position:absolute;left:0px;top:695px;width:25px;height:1px;background:#c3c3c3;"></div>
<div style="position:absolute;left:0.5px;top:680px;width:25px;height:14px;line-height:14px;text-align:center;font-size:12.6px;color:#1a1a1a;overflow:hidden;">32</div>
<div style="position:absolute;left:0px;top:715px;width:25px;height:1px;background:#c3c3c3;"></div>
<div style="position:absolute;left:0.5px;top:700px;width:25px;height:14px;line-height:14px;text-align:center;font-size:12.6px;color:#1a1a1a;overflow:hidden;">33</div>
<div style="position:absolute;left:0px;top:735px;width:25px;height:1px;background:#c3c3c3;"></div>
<div style="position:absolute;left:0.5px;top:720px;width:25px;height:14px;line-height:14px;text-align:center;font-size:12.6px;color:#1a1a1a;overflow:hidden;">34</div>
<div style="position:absolute;left:0px;top:755px;width:25px;height:1px;background:#c3c3c3;"></div>
<div style="position:absolute;left:0.5px;top:740px;width:25px;height:14px;line-height:14px;text-align:center;font-size:12.6px;color:#1a1a1a;overflow:hidden;">35</div>
<div style="position:absolute;left:0px;top:775px;width:25px;height:1px;background:#c3c3c3;"></div>
<div style="position:absolute;left:0.5px;top:760px;width:25px;height:14px;line-height:14px;text-align:center;font-size:12.6px;color:#1a1a1a;overflow:hidden;">36</div>
<div style="position:absolute;left:0px;top:795px;width:25px;height:1px;background:#c3c3c3;"></div>
<div style="position:absolute;left:0.5px;top:780px;width:25px;height:14px;line-height:14px;text-align:center;font-size:12.6px;color:#1a1a1a;overflow:hidden;">37</div>
<div style="position:absolute;left:0px;top:815px;width:25px;height:1px;background:#c3c3c3;"></div>
<div style="position:absolute;left:0.5px;top:800px;width:25px;height:14px;line-height:14px;text-align:center;font-size:12.6px;color:#1a1a1a;overflow:hidden;">38</div>
<div style="position:absolute;left:0px;top:835px;width:25px;height:1px;background:#c3c3c3;"></div>
<div style="position:absolute;left:0.5px;top:820px;width:25px;height:14px;line-height:14px;text-align:center;font-size:12.6px;color:#1a1a1a;overflow:hidden;">39</div>
<div style="position:absolute;left:0px;top:855px;width:25px;height:1px;background:#c3c3c3;"></div>
<div style="position:absolute;left:0.5px;top:840px;width:25px;height:14px;line-height:14px;text-align:center;font-size:12.6px;color:#1a1a1a;overflow:hidden;">40</div>
<div style="position:absolute;left:0px;top:875px;width:25px;height:1px;background:#c3c3c3;"></div>
<div style="position:absolute;left:0.5px;top:860px;width:25px;height:14px;line-height:14px;text-align:center;font-size:12.6px;color:#1a1a1a;overflow:hidden;">41</div>
<div style="position:absolute;left:0px;top:895px;width:25px;height:1px;background:#c3c3c3;"></div>
<div style="position:absolute;left:0.5px;top:880px;width:25px;height:14px;line-height:14px;text-align:center;font-size:12.6px;color:#1a1a1a;overflow:hidden;">42</div>
<div style="position:absolute;left:0.5px;top:900px;width:25px;height:14px;line-height:14px;text-align:center;font-size:12.6px;color:#1a1a1a;overflow:hidden;clip-path:inset(0 0 8px 0);">43</div>
<div style="position:absolute;left:25px;top:26px;width:1px;height:880px;background:#9b9b9b;"></div>
<div style="position:absolute;left:0px;top:175px;width:26px;height:1px;background:#9b9b9b;"></div>
<svg style="left:10px;top:10px" width="12" height="12"><path d="M12 0V12H0Z" fill="#b4b4b4"/></svg>
<div style="position:absolute;left:24px;top:24px;width:29px;height:23px;background:transparent;border:2px solid #14703d"></div>
<div style="position:absolute;left:48px;top:42px;width:7px;height:7px;background:#fff;"></div>
<div style="position:absolute;left:49px;top:43px;width:5px;height:5px;background:#14703d;"></div>
<div style="position:absolute;left:1894px;top:25px;width:1px;height:882px;background:#9b9b9b;"></div>
<div style="position:absolute;left:0px;top:906px;width:1895px;height:1px;background:#9b9b9b;"></div>
<div style="position:absolute;left:1898px;top:8px;width:20px;height:898px;background:#f3f3f3;"></div>
<div style="position:absolute;left:1898px;top:8px;width:19px;height:19px;background:#fff;border:1px solid #a3a3a3"></div>
<svg style="left:1903px;top:14px" width="9" height="5"><path d="M0 5L4.5 0L9 5Z" fill="#222"/></svg>
<div style="position:absolute;left:1898px;top:27px;width:19px;height:814px;background:#fff;border:1px solid #a3a3a3"></div>
<div style="position:absolute;left:1898px;top:887px;width:19px;height:19px;background:#fff;border:1px solid #a3a3a3"></div>
<svg style="left:1903px;top:894px" width="9" height="5"><path d="M0 0L4.5 5L9 0Z" fill="#222"/></svg>
<div style="position:absolute;left:0px;top:907px;width:1921px;height:31px;background:#e6e6e6;"></div>
<svg style="left:30px;top:918px" width="6" height="9"><path d="M5.3 0V9L0 4.5Z" fill="#c3c3c3"/></svg>
<svg style="left:62px;top:918px" width="6" height="9"><path d="M0 0V9L5.3 4.5Z" fill="#10602f"/></svg>
<div style="position:absolute;left:112px;top:910px;width:1px;height:24px;background:#a6a6a6;"></div>
<div style="position:absolute;left:227px;top:910px;width:1px;height:24px;background:#a6a6a6;"></div>
<div style="position:absolute;left:335px;top:910px;width:1px;height:24px;background:#a6a6a6;"></div>
<div style="position:absolute;left:767px;top:910px;width:1px;height:24px;background:#a6a6a6;"></div>
<div style="position:absolute;left:871px;top:910px;width:1px;height:24px;background:#a6a6a6;"></div>
<div style="position:absolute;left:115px;top:909px;width:110px;height:26px;background:#e6b8b7;"></div>
<div style="position:absolute;left:127.5px;top:908px;width:104.5px;height:26px;line-height:26px;white-space:pre;font-size:17px;color:#000;letter-spacing:-0.225px;">Cover Slide</div>
<div style="position:absolute;left:242.5px;top:908px;width:97.5px;height:26px;line-height:26px;white-space:pre;font-size:17px;color:#444;letter-spacing:-0.085px;">Disclaimer</div>
<div style="position:absolute;left:338px;top:909px;width:121px;height:26px;background:#4472c4;"></div>
<div style="position:absolute;left:349.4px;top:908px;width:116.60000000000002px;height:26px;line-height:26px;white-space:pre;font-size:17px;color:#fff;letter-spacing:0.05px;">Assumptions</div>
<div style="position:absolute;left:461px;top:906px;width:172px;height:29px;background:#fff;border-left:1px solid #a3a3a3;border-right:1px solid #a3a3a3"></div>
<div style="position:absolute;left:462px;top:909px;width:170px;height:23px;background:linear-gradient(#fff 0%,#fff 20%,#b7d7a6 100%);"></div>
<div style="position:absolute;left:461px;top:933px;width:172px;height:2px;background:#217346;"></div>
<div style="position:absolute;left:473px;top:908px;width:167px;height:26px;line-height:26px;white-space:pre;font-size:17px;color:#1e7145;letter-spacing:0.1px;font-weight:700;">Income Statement</div>
<div style="position:absolute;left:635px;top:909px;width:130px;height:26px;background:#ed7d31;"></div>
<div style="position:absolute;left:646.9px;top:908px;width:125.85000000000002px;height:26px;line-height:26px;white-space:pre;font-size:17px;color:#000;letter-spacing:-0.285px;">Balance Sheet</div>
<div style="position:absolute;left:770px;top:909px;width:99px;height:26px;background:#ffc000;"></div>
<div style="position:absolute;left:781.9px;top:908px;width:94.35000000000002px;height:26px;line-height:26px;white-space:pre;font-size:17px;color:#000;letter-spacing:-0.55px;">Cash Flow</div>
<div style="position:absolute;left:874px;top:909px;width:9px;height:26px;background:#ff0000;"></div>
<div style="position:absolute;left:893px;top:924px;width:2px;height:2px;background:#1e6e3c;"></div>
<div style="position:absolute;left:898px;top:924px;width:2px;height:2px;background:#1e6e3c;"></div>
<div style="position:absolute;left:903px;top:924px;width:2px;height:2px;background:#1e6e3c;"></div>
<svg style="left:920px;top:912px" width="22" height="22"><circle cx="11" cy="11" r="9.5" fill="none" stroke="#8a8a8a" stroke-width="1.2"/><path d="M5.5 11H16.5M11 5.5V16.5" stroke="#767676" stroke-width="1.6" fill="none"/></svg>
<div style="position:absolute;left:961px;top:916px;width:3px;height:3px;background:#c3c3c3;"></div>
<div style="position:absolute;left:961px;top:921px;width:3px;height:3px;background:#c3c3c3;"></div>
<div style="position:absolute;left:961px;top:926px;width:3px;height:3px;background:#c3c3c3;"></div>
<div style="position:absolute;left:981px;top:913px;width:913px;height:20px;background:#f3f3f3;"></div>
<div style="position:absolute;left:981px;top:913px;width:19px;height:19px;background:#fff;border:1px solid #a3a3a3"></div>
<svg style="left:987px;top:918px" width="5" height="9"><path d="M5 0V9L0 4.5Z" fill="#222"/></svg>
<div style="position:absolute;left:1000px;top:913px;width:749px;height:19px;background:#fff;border:1px solid #a3a3a3"></div>
<div style="position:absolute;left:1874px;top:913px;width:19px;height:19px;background:#fff;border:1px solid #a3a3a3"></div>
<svg style="left:1882px;top:918px" width="5" height="9"><path d="M0 0V9L5 4.5Z" fill="#222"/></svg>
<div style="position:absolute;left:0px;top:938px;width:1921px;height:1px;background:#c6c6c6;"></div>
<div style="position:absolute;left:0px;top:939px;width:1921px;height:26px;background:#f3f3f3;"></div>
<div style="position:absolute;left:14px;top:940px;width:60px;height:26px;line-height:26px;white-space:pre;font-size:12px;color:#333;letter-spacing:0.25px">Ready</div>
<svg style="left:77px;top:944px" width="16" height="16"><rect x="1.6" y="4.9" width="13" height="9.4" fill="#fff" stroke="#666" stroke-width="1"/><rect x="8.4" y="1.3" width="6.7" height="3.6" fill="#666"/><circle cx="3.4" cy="3.2" r="3.3" fill="#666"/><path d="M3.9 6.9H5.9M7 6.9H9M10.1 6.9H12.1M3.9 9.6H5.9M7 9.6H9M10.1 9.6H12.1M3.9 12.2H5.9M7 12.2H9M10.1 12.2H12.1" stroke="#666" stroke-width="1" fill="none"/></svg>
<svg style="left:115px;top:943px" width="21" height="20"><path d="M7.0 1.9A7.5 7.5 0 0 0 8.0 16.8" fill="none" stroke="#555" stroke-width="1.2" stroke-dasharray="3 1.5"/><path d="M8.5 1V9.2M6.25 7.1L8.5 9.4L10.8 7.1" fill="none" stroke="#555" stroke-width="1"/><path d="M12.1 7.4H17.1M14.6 5.2L17.1 7.4L14.6 9.6" fill="none" stroke="#555" stroke-width="1"/><path d="M10.4 10.4L20 18.75M19.6 11L10.4 18.75" stroke="#444" stroke-width="1.7" fill="none"/></svg>
<div style="position:absolute;left:138px;top:940px;width:200px;height:26px;line-height:26px;white-space:pre;font-size:12px;color:#333;font-weight:700;color:#333;letter-spacing:0.32px">Accessibility: Investigate</div>
<svg style="left:1409px;top:943px" width="20" height="19"><rect x="0.2" y="0.2" width="18.6" height="12.8" rx="1.5" fill="#4d4d4d"/><path d="M4.6 16.3H8.6V17.8H3.8Z" fill="#4d4d4d"/><circle cx="13.5" cy="13.3" r="6.1" fill="#f3f3f3"/><circle cx="13.5" cy="13.3" r="4.2" fill="none" stroke="#4d4d4d" stroke-width="2.2" stroke-dasharray="1.9 1.4"/><circle cx="13.5" cy="13.3" r="2.9" fill="none" stroke="#4d4d4d" stroke-width="2.6"/></svg>
<div style="position:absolute;left:1430px;top:940px;width:120px;height:26px;line-height:26px;white-space:pre;font-size:12px;color:#333;letter-spacing:0.35px">Display Settings</div>
<div style="position:absolute;left:1547px;top:939px;width:50px;height:26px;background:#c6c6c6;"></div>
<svg style="left:1564px;top:944px" width="16" height="16"><path d="M0.5 0.5H15.5V15.5H0.5ZM0.5 5.5H15.5M0.5 10.5H15.5M5.5 0.5V15.5M10.5 0.5V15.5" fill="none" stroke="#6a6a6a" stroke-width="1"/></svg>
<svg style="left:1613px;top:944px" width="17" height="15"><path d="M0.5 0.5H16.5V14.5H0.5Z" fill="none" stroke="#6a6a6a" stroke-width="1"/><path d="M4.5 2.5H12.5V12.5H4.5Z" fill="none" stroke="#6a6a6a" stroke-width="1"/><path d="M6 5.2H11M6 7.5H11M6 9.8H11" stroke="#6a6a6a" stroke-width="1"/></svg>
<svg style="left:1663px;top:944px" width="17" height="16"><path d="M0.5 0.5H16.5V15.5H0.5Z" fill="none" stroke="#6a6a6a" stroke-width="1"/><path d="M5.5 0.5V9.5M10.5 0.5V9.5H0.5" fill="none" stroke="#6a6a6a" stroke-width="1"/></svg>
<div style="position:absolute;left:1704px;top:952px;width:10px;height:1px;background:#444;"></div>
<div style="position:absolute;left:1720px;top:952px;width:126px;height:1px;background:#444;"></div>
<div style="position:absolute;left:1767px;top:945px;width:6px;height:14px;background:#444;"></div>
<div style="position:absolute;left:1782px;top:949px;width:1px;height:8px;background:#444;"></div>
<div style="position:absolute;left:1851px;top:952px;width:10px;height:1px;background:#444;"></div>
<div style="position:absolute;left:1855.5px;top:947px;width:1px;height:11px;background:#444;"></div>
<div style="position:absolute;left:1877px;top:940px;width:40px;height:26px;line-height:26px;white-space:pre;font-size:12px;color:#333;letter-spacing:0.25px">80%</div>
<div style="position:absolute;left:0px;top:965px;width:1921px;height:1px;background:#8a948a;"></div>
<div style="position:absolute;left:1919px;top:0px;width:1px;height:966px;background:#f8f8f8;"></div>
<div style="position:absolute;left:1920px;top:0px;width:1px;height:966px;background:#000;"></div>
</body></html>
